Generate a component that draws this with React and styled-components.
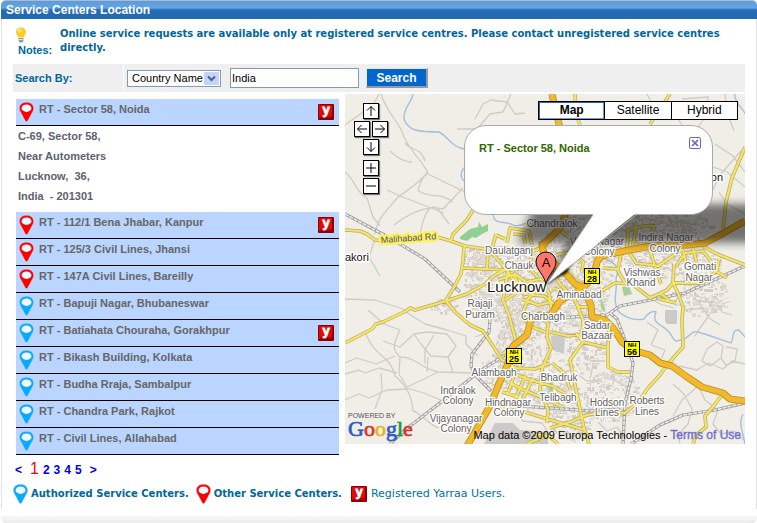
import React, { useState } from 'react';
import styled, { createGlobalStyle, css } from 'styled-components';

const sans = '"Liberation Sans", Arial, sans-serif';
const wide = '"DejaVu Sans", Verdana, sans-serif';

const GlobalStyle = createGlobalStyle`
  *, *::before, *::after { box-sizing: border-box; }
  body { margin: 0; background: #fff; font: bold 11px/14px ${sans}; color: #006699; }
  button, input, select { font-family: inherit; }
`;

const Page = styled.main`
  display: flex;
  flex-direction: column;
  margin-left: 1px;
`;

const TitleBar = styled.header`
  height: 19px;
  padding: 1px 5px 0;
  border-top: 1px solid #aebdca;
  border-radius: 5px 5px 0 0;
  background: linear-gradient(#5b9bdd 0, #66a5e2 7px, #3a80c8 8px, #2369b5 10px, #236ab6 100%);
`;

const Title = styled.h1`
  margin: 0;
  font: bold 12px/16px ${sans};
  color: #fff;
`;

const Body = styled.div`
  padding: 8px 11px 3px;
  border: 1px solid #e2e2e2;
  border-top: 0;
  border-bottom: 0;
`;

const Footer = styled.div`
  height: 8px;
  margin-top: 7px;
  border-bottom: 1px solid #ddd;
  border-radius: 0 0 9px 9px;
  background: linear-gradient(#f7f7f7, #ececec);
`;

const Note = styled.section`
  display: grid;
  grid-template-columns: 47px 1fr;
  height: 37px;
`;

const NoteLabel = styled.div`
  display: flex;
  flex-direction: column;
  padding-left: 2px;
  span { margin: 0 0 0 3px; line-height: 12px; }
  svg { display: block; }
`;

const NoteText = styled.p`
  margin: 0;
  font: bold 10px/14px ${wide};
  padding-right: 24px;
`;

const SearchBar = styled.form`
  display: grid;
  grid-template-columns: 110px 1fr;
  gap: 1px;
  height: 28px;
`;

const SearchCell = styled.div`
  display: flex;
  align-items: center;
  padding: 0 2px;
  background: #efefef;
`;

const SelectWrap = styled.div`
  position: relative;
  display: flex;
  margin: 0 9px 0 1px;
  svg { position: absolute; right: 2px; top: 2px; pointer-events: none; }
`;

const Select = styled.select`
  appearance: none;
  width: 94px;
  height: 17px;
  padding: 0 0 0 4px;
  border: 1px solid #7f9db9;
  border-radius: 0;
  background: #fff;
  font-size: 11px;
  color: #000;
`;

const TextBox = styled.input`
  width: 129px;
  height: 20px;
  margin-right: 7px;
  padding: 0 1px;
  border: 1px solid #7f9db9;
  background: #fff;
  font-size: 11px;
  color: #000;
`;

const SearchButton = styled.button`
  width: 62px;
  height: 20px;
  padding: 0;
  border: 1px solid;
  border-color: #e8e8e8 #999 #999 #e8e8e8;
  border-right-width: 2px;
  border-bottom-width: 2px;
  background: #0066cc;
  color: #fff;
  font: bold 12px/14px ${sans};
`;

const Columns = styled.div`
  display: grid;
  grid-template-columns: 323fr 400fr;
  gap: 6px;
  padding: 2px 0 0 3px;
  align-items: start;
`;

const CenterList = styled.ul`
  margin: 5px 0 0;
  padding: 0;
  list-style: none;
`;

const CenterRow = styled.button`
  display: flex;
  align-items: flex-start;
  width: 100%;
  height: 27px;
  padding: 3px 5px 0 3px;
  border: 0;
  border-bottom: 1px solid #000;
  background: #bad5ff;
  color: #666;
  font: bold 11px/14px ${sans};
  text-align: left;
  cursor: pointer;
  span { flex: 1; margin-left: 5px; }
  svg { flex: none; }
`;

const UserMark = styled.i`
  display: flex;
  padding-top: 2px;
`;

const Address = styled.address`
  height: 86px;
  padding: 0 2px;
  color: #5b6270;
  font: bold 11px/20px ${sans};
  white-space: pre-line;
`;

const Pager = styled.nav`
  display: flex;
  align-items: baseline;
  gap: 4px;
  height: 20px;
  margin-top: 5px;
  padding-left: 2px;
`;

const PageLink = styled.a`
  color: #0000e0;
  font: bold 12px/18px ${sans};
  text-decoration: none;
  ${p => p.$current && css`color: #f00; font-weight: 400; font-size: 16px;`}
  ${p => p.$before && css`margin-right: 4px;`}
  ${p => p.$after && css`margin-left: 4px;`}
`;

const Legend = styled.footer`
  display: flex;
  align-items: center;
  height: 24px;
  margin-top: 2px;
`;

const LegendItem = styled.div`
  display: flex;
  align-items: center;
  gap: 3px;
  margin-right: 7px;
  font: bold 10px/14px ${wide};
  a { margin-left: 1px; color: #0070a8; font: 11px/14px ${wide}; text-decoration: none; }
  &:last-child { margin-left: 2px; }
`;

const MapPanel = styled.section`
  position: relative;
  height: 350px;
  overflow: hidden;
  background: #f1eee8;
`;

const MapDrawing = styled.svg`
  display: block;
  width: 100%;
  height: 100%;
  font-family: ${sans};
  font-weight: 400;
`;

const PanControls = styled.div`
  position: absolute;
  left: 9px;
  top: 9px;
  display: grid;
  grid-template-columns: repeat(4, 9px);
  row-gap: 2px;
`;

const MapButton = styled.button`
  display: flex;
  width: 16px;
  height: 16px;
  grid-column: ${p => p.$col} / span 2;
  margin-top: ${p => (p.$apart ? 3 : 0)}px;
  padding: 0;
  border: 1px solid #000;
  background: #fff;
  box-shadow: 1px 1px 1px #777;
`;

const TypeSwitch = styled.div`
  position: absolute;
  top: 7px;
  right: 7px;
  display: flex;
  width: 200px;
  height: 19px;
  border: 1px solid #000;
  background: #fff;
`;

const TypeButton = styled.button`
  flex: 1;
  padding: 0;
  border: 0;
  border-right: 1px solid #000;
  background: #fff;
  color: #000;
  font: 12px/15px ${sans};
  &:last-child { border-right: 0; }
  &[aria-pressed='true'] { font-weight: 700; box-shadow: inset 1px 1px #2c62b4, inset -1px -1px #6b9ae0; }
`;

const Balloon = styled.article`
  position: absolute;
  left: calc(50% - 81px);
  top: 31px;
  display: flex;
  justify-content: space-between;
  align-items: flex-start;
  width: 249px;
  height: 90px;
  padding: 11px 11px 0 14px;
  border: 1px solid #aaa;
  border-radius: 22px;
  background: #fff;
  color: #336600;
  h2 { margin: 4px 0 0; font: bold 11px/14px ${sans}; }
`;

const BalloonTail = styled.svg`
  position: absolute;
  left: calc(50% + 1px);
  top: 119px;
`;

const CloseButton = styled.button`
  display: flex;
  width: 12px;
  height: 12px;
  padding: 0;
  border: 1px solid #6666cc;
  border-radius: 2px;
  background: #fff;
`;

const Brand = styled.svg`
  position: absolute;
  left: 2px;
  bottom: 0;
`;

const Credit = styled.p`
  position: absolute;
  right: 4px;
  bottom: 1px;
  margin: 0;
  color: #000;
  font: 11px/16px ${sans};
  white-space: nowrap;
  a { color: #7070cc; font-size: 12px; text-decoration: none; -webkit-text-stroke: 0.4px; }
`;

function Pin({ color }) {
  return (
    <svg width="15" height="20" viewBox="0 0 15 20" aria-hidden="true">
      <path d="M7.500.3C3 .3.300 3 .300 6.200c0 1.800 1 3.500 2 5.300l4.300 8h1.800l4.300-8c1-1.800 2-3.500 2-5.300C14.700 3 12 .3 7.500.3Z" fill={color} stroke="#dfeaff" strokeWidth=".4" />
      <ellipse cx="7.500" cy="6.200" rx="4.900" ry="3.700" fill="#f2f7ff" />
    </svg>
  );
}

function YarraaMark() {
  return (
    <svg width="16" height="16" viewBox="0 0 16 16" aria-hidden="true">
      <rect width="16" height="16" rx="1" fill="#8d0000" />
      <rect x="1" y="1" width="13" height="13" fill="#e00a0a" />
      <rect x="2" y="12" width="12" height="2" fill="#b40000" />
      <text x="8" y="10" textAnchor="middle" fill="#fff" stroke="#fff" strokeWidth=".8" fontFamily='"Liberation Sans", sans-serif' fontWeight="700" fontStyle="normal" fontSize="13">y</text>
    </svg>
  );
}

function Bulb() {
  return (
    <svg width="12" height="17" viewBox="0 0 12 17" aria-hidden="true">
      <path d="M6 .5C2.800.5 1 2.600 1 5c0 2.200 1.600 3.300 2.200 5.500h5.600C9.400 8.300 11 7.200 11 5 11 2.600 9.200.5 6 .5Z" fill="#ffc928" />
      <ellipse cx="4.800" cy="3.800" rx="2.300" ry="2" fill="#ffe680" />
      <path d="M3.500 11h5v2.500L7.500 15.500h-3l-1-2Z" fill="#9a9a98" />
      <path d="M3.500 12.500h5" stroke="#ddd" />
    </svg>
  );
}

const glyphs = {
  up: 'M7 12V2.500M3 6.500l4-4 4 4',
  left: 'M12 7H2.500M6.500 3l-4 4 4 4',
  right: 'M2 7h9.500M7.500 3l4 4-4 4',
  down: 'M7 2v9.500M3 7.500l4 4 4-4',
  in: 'M7 2v10M2 7h10',
  out: 'M2 7h10',
};

const controls = [
  ['up', 'Pan up', 2],
  ['left', 'Pan left', 1],
  ['right', 'Pan right', 3],
  ['down', 'Pan down', 2],
  ['in', 'Zoom in', 2],
  ['out', 'Zoom out', 2],
];

const railways = [
  'M0 120L45 144L80 165L115 198',
  'M45 350L60 336L100 305L135 277L160 261L180 244',
  'M145 225L144 238L127 260L126 272L132 283L146 297',
  'M400 172L340 199L275 212L262 221L210 224',
  'M265 219L272 225L277 238L288 269L286 285L280 309L278 350',
  'M286 350L315 331L338 321L370 316L400 309',
  'M150 310L205 314L245 317L275 315',
];

const rivers = [
  'M68 0C66 10 58 14 59 25C63 37 74 38 94 38C104 43 107 54 120 55',
  'M119 74C114 80 116 84 119 87',
  'M148 120C149 132 160 126 168 131C174 134 178 128 186 129',
  'M253 163C264 166 277 170 271 184C273 197 267 205 273 217C280 224 291 227 299 225C302 220 307 216 311 218C306 230 317 230 323 237C329 243 327 249 336 246C347 244 345 234 356 239C367 242 374 245 386 249C389 246 386 235 394 236L400 243',
  'M390 0C388 8 400 16 400 20',
  'M398 320C393 328 398 339 400 350',
];

const lanes = [
  'M34 0L28 11L0 31M36 0C42 20 55 28 59 43C68 61 75 64 83 79',
  'M45 57C53 65 60 68 67 68M0 78C12 88 10 98 22 104L28 123L35 132',
  'M83 77C77 87 65 94 52 104C43 116 33 122 30 140',
  'M83 79C75 85 72 98 74 97C84 105 94 97 108 108',
  'M60 49C67 58 75 52 80 67M83 80L120 98M42 96L55 102L99 119M49 131C66 118 82 111 98 115L118 94',
  'M30 145L24 163L35 182M75 142C79 116 86 109 93 115L104 130',
  'M132 35L145 20L158 18L166 0M112 35L132 35L145 42',
  'M130 25L138 10L146 6L162 8L170 20L180 19',
  'M0 205L30 206L61 216M21 240C30 264 45 260 50 282C63 293 67 304 68 317',
  'M23 216L39 230L55 236C47 252 48 257 55 263C71 263 76 275 93 278L130 279',
  'M61 218L80 230L102 236L121 242L121 250L133 262',
  'M69 240L82 238L102 240L111 252L103 263L86 262L76 250L69 240',
  'M38 247L55 253L69 240M55 263L54 280L62 293L79 285L93 278M83 263L82 278M103 263L108 279M50 262L31 270L12 264L0 269',
  'M0 280L14 276L20 279L34 274L52 279M0 306L14 300L24 304L42 296L62 295M36 279L37 296L30 315',
  'M68 317C75 318 82 330 94 334M62 294L79 299L98 307M80 270L80 256L89 241M130 243L138 240',
  'M302 0L309 14L328 18L340 35M337 5L363 3L362 20L350 38M380 0L382 18L389 37',
  'M368 96L374 82L395 58L400 55M370 50L388 62L400 78M368 73L382 78L400 93',
  'M374 98L382 110L400 120M319 133L336 128L351 131',
  'M340 216L358 214L364 224L375 231M352 207L370 208L377 218L387 221M365 220L355 234L350 242',
  'M362 255L372 248L378 252L376 264L365 272L357 267L362 255M381 253L392 255L390 268L381 271L376 264',
  'M305 204L315 210L329 214M302 228L313 236L306 251M306 251L320 256L316 266L306 263',
  'M334 272L352 276L363 269L378 275L387 267L400 270M352 293L337 306L328 322',
  'M328 290L339 300L347 315L343 330L333 341L335 350M353 291L360 306L373 316L368 330L376 340L389 337L400 347',
  'M216 312L207 322L218 333L238 328M222 337L230 348M170 318L178 327L197 329L205 341M253 328L262 337L272 333L280 344',
  'M238 259L246 267L260 267M232 280L242 287L257 287M249 266L245 285M265 284L280 292L286 302',
];

const streets = [
  'M0 136L15 137L22 140L30 146L40 147L75 142L92 143L106 147L120 152L140 155L160 154L182 158L197 155',
  'M106 147L108 140L122 126L128 116',
  'M119 153L118 167L116 180L108 195L101 206',
  'M118 174L141 175L165 176L184 174L193 183',
  'M143 155L142 176M151 140L146 158L162 176L177 199',
  'M0 249L27 235L31 230L38 228L61 217L65 214L70 216L101 207L122 200L140 190L150 181L164 174',
  'M101 207L110 218L125 231L138 237L148 252L157 266L171 274L190 275L205 269',
  'M163 176L160 195L158 206L164 221L171 248L158 260',
  'M162 149L165 134L184 137L187 152M168 140L179 141L180 150M160 145L151 141',
  'M153 186L170 180L181 188L196 185L204 199L207 219M164 191L179 200L199 202L213 213',
  'M177 205L193 211L206 208M198 190L183 205L177 221L184 232L200 238M169 181L176 196L160 206',
  'M178 220L194 222L203 229L202 243L206 254L197 275L195 296L203 316L202 329',
  'M163 277L182 285L207 292L220 299M164 288L176 295L201 305L217 313',
  'M171 276L163 299M181 281L170 305M157 298L174 303M188 284L177 307M207 269L220 280L225 295',
  'M151 313L180 318L209 327L240 336M205 334L225 328L242 321L260 318L280 319L293 308L303 294L315 281L322 271L338 253L337 226L338 213L333 199L328 189L329 170',
  'M238 248L225 266L229 286L233 305L238 330L244 350M231 239L238 248L263 254L263 273L273 278L285 278',
  'M205 238L223 242L238 240L263 241M264 234L263 254M207 178L216 191L230 206L238 226L237 240M208 194L226 200L234 213L248 213',
  'M252 201L258 196L270 189L287 190L305 204L322 196L328 189L358 189L372 176L374 165',
  'M258 174L272 175L280 189M273 175L276 160L289 154M283 157L291 169L313 172L338 155M304 154L316 190',
  'M338 155L341 171L366 174L382 184M332 171L340 159L358 157L371 174M348 154L352 170M314 205L331 209M315 199L324 206',
  'M282 154L283 136L298 132L310 132M286 148L306 147M291 131L288 152M310 132L302 151',
  'M400 53L387 84L381 108L378 135M354 150L372 160L400 171M325 0L317 12L305 30M230 0L231 20L235 31',
  'M377 301L367 314L360 322L361 333L351 341L348 350',
  'M209 131L226 145L238 151L251 163M183 175L188 157L203 151',
  'M211 161L227 158L238 168L237 178M218 171L228 184L237 190M189 340L204 342L213 350M182 350L198 343',
];

const highways = [
  'M122 352L145 312L153 292L162 272L168 252L182 241L186 225L195 221L205 222L215 207L238 194',
  'M207 0L211 18L219 50L222 115L216 133L204 145L197 151L199 160L211 171L220 179L230 190L238 194L246 211L247 223L260 226L268 234L277 248L287 256L305 261L315 269L327 272L342 283L357 293L378 299L385 305L400 307',
  'M400 127L375 141L360 149L342 151L320 151L300 153L284 156L256 162L252 168L249 181L238 194',
];

const places = [
  ['Daulatganj', 164, 160], ['Chauk', 174, 175], ['Chandralok', 207, 133],
  ['Indira Nagar', 321, 147], ['Colony', 320, 158], ['Vikas Nagar', 252, 151], ['Colony', 254, 161],
  ['Gomati', 355, 176], ['Nagar', 354, 187], ['Vishwas', 297, 182], ['Khand', 296, 192],
  ['Aminabad', 234, 204], ['Sadar', 252, 235], ['Bazaar', 252, 245], ['Charbagh', 198, 226],
  ['Rajaji', 135, 213], ['Puram', 135, 224], ['Alambagh', 149, 282], ['Bhadruk', 214, 287],
  ['Telibagh', 213, 307], ['Indralok', 113, 300], ['Colony', 113, 310],
  ['Hindnagar', 163, 312], ['Colony', 164, 322], ['Vijayanagar', 111, 328], ['Colony', 111, 338],
  ['Hodson', 262, 312], ['Lines', 262, 322], ['Roberts', 302, 310], ['Lines', 302, 321],
];

// Built-up districts: centre x, centre y, radius x, radius y, number of blocks.
const districts = [
  [170, 190, 52, 40, 800], [225, 180, 42, 52, 800], [185, 240, 32, 28, 320], [132, 166, 15, 14, 130],
  [150, 205, 30, 22, 180], [300, 148, 60, 28, 520], [330, 168, 48, 20, 240], [235, 240, 30, 38, 320],
  [195, 292, 34, 24, 280], [155, 276, 20, 18, 130], [266, 302, 28, 26, 280], [225, 318, 22, 28, 190],
  [355, 201, 28, 20, 220], [290, 130, 80, 16, 350], [166, 255, 16, 26, 140], [98, 212, 13, 8, 50],
];

function makeBlocks() {
  let seed = 71;
  const next = () => {
    seed = (seed * 16807) % 2147483647;
    return seed / 2147483647;
  };
  const paths = ['', ''];
  districts.forEach(([cx, cy, rx, ry, count]) => {
    for (let i = 0; i < count; i += 1) {
      const angle = next() * Math.PI * 2;
      const reach = Math.sqrt(next());
      const x = Math.round(cx + Math.cos(angle) * reach * rx);
      const y = Math.round(cy + Math.sin(angle) * reach * ry);
      const w = 1 + Math.round(next() * 3);
      const h = 1 + Math.round(next() * 2);
      paths[i % 2] += `M${x} ${y}h${w}v${h}h-${w}z`;
    }
  });
  return paths;
}

const blocks = makeBlocks();

function Lines({ paths, ...rest }) {
  return <path d={paths.join('')} fill="none" strokeLinejoin="round" {...rest} />;
}

function Shield({ x, y, number }) {
  return (
    <g transform={`translate(${x} ${y})`} textAnchor="middle" fontWeight="700">
      <rect x=".5" y=".5" width="15" height="15" fill="#ff0" stroke="#000" />
      <text x="8" y="6" fontSize="6">NH</text>
      <text x="8" y="14" fontSize="9">{number}</text>
    </g>
  );
}

function CityMap() {
  return (
    <MapDrawing viewBox="0 0 400 350" preserveAspectRatio="xMidYMid slice" role="img" aria-label="Map of Lucknow">
      <defs>
        <filter id="soft" x="-20%" y="-50%" width="140%" height="200%"><feGaussianBlur stdDeviation="4" /></filter>
        <filter id="tight"><feGaussianBlur stdDeviation="1" /></filter>
      </defs>
      <rect width="400" height="350" fill="#f1eee8" />
      <path d={blocks[0]} fill="#d3cdc5" />
      <path d={blocks[1]} fill="#dfdad3" />
      <path d="M115 143l10-8 8-2 1-5 3 5 6-3v7l-6 3-6 4-4-1-5 4-7-2z" fill="#92cf93" />
      <path d="M277 193l7-1 3 8-8 2zM205 287l3 1v10l-5 2zM255 203l4 8 2 8-5-5z" fill="#a8cf95" />
      <path d="M320 216h12v14h-10l-2-3zM206 242h14l-1 18-11-4zM150 329h18l7 7 28 2v12h-64z" fill="#cbcac8" />
      <Lines paths={lanes} stroke="#d0cbc4" strokeWidth="1.300" />
      <Lines paths={rivers} stroke="#a4c0da" strokeWidth="1.400" />
      <Lines paths={railways} stroke="#9b9b9b" strokeWidth="3.200" />
      <Lines paths={railways} stroke="#ececea" strokeWidth="1.600" strokeDasharray="4 1" />
      <Lines paths={streets} stroke="#b5aa72" strokeWidth="3.600" />
      <Lines paths={streets} stroke="#f7e65c" strokeWidth="2.200" />
      <Lines paths={highways} stroke="#bd8c22" strokeWidth="7" />
      <Lines paths={highways} stroke="#f2b92a" strokeWidth="5.400" />
      <g textAnchor="middle" fontSize="10" fill="#62605d" stroke="#fff" strokeWidth="2.500" strokeLinejoin="round" paintOrder="stroke">
        {places.map(([name, x, y]) => <text key={`${name}${x}${y}`} x={x} y={y}>{name}</text>)}
      </g>
      <text x="36" y="149" transform="rotate(-4 36 149)" fontSize="9" fill="#555" stroke="#fbf06b" strokeWidth="5" strokeLinejoin="round" paintOrder="stroke">Malihabad Rd</text>
      <g fill="#111" stroke="#fff" strokeWidth="3" strokeLinejoin="round" paintOrder="stroke">
        <text x="0" y="167" fontSize="11">akori</text>
        <text x="378" y="87" textAnchor="end" fontSize="11">Chinhaton</text>
        <text x="142" y="198" fontSize="15">Lucknow</text>
      </g>
      <Shield x={239} y={174} number="28" />
      <Shield x={161} y={254} number="25" />
      <Shield x={279} y={247} number="56" />
      <path d="M190 110H420V149H245L217 172L201 192L222 149H172Z" fill="#000" opacity=".52" filter="url(#soft)" />
      <path d="M201 191l7-14 10-7h8l-4 9-12 6z" fill="#000" opacity=".85" filter="url(#tight)" />
      <path d="M201 191C200 181 191 176 191 168a10 10 0 0 1 20 0C211 176 202 181 201 191Z" fill="#ff776b" stroke="#000" />
      <text x="201" y="173" textAnchor="middle" fontSize="13">A</text>
    </MapDrawing>
  );
}

const centers = [
  { name: 'RT - Sector 58, Noida', user: true, address: 'C-69, Sector 58,\nNear Autometers\nLucknow, \u00a036,\nIndia \u00a0- 201301' },
  { name: 'RT - 112/1 Bena Jhabar, Kanpur', user: true },
  { name: 'RT - 125/3 Civil Lines, Jhansi' },
  { name: 'RT - 147A Civil Lines, Bareilly' },
  { name: 'RT - Bapuji Nagar, Bhubaneswar', authorized: true },
  { name: 'RT - Batiahata Chouraha, Gorakhpur', authorized: true, user: true },
  { name: 'RT - Bikash Building, Kolkata', authorized: true },
  { name: 'RT - Budha Rraja, Sambalpur', authorized: true },
  { name: 'RT - Chandra Park, Rajkot', authorized: true },
  { name: 'RT - Civil Lines, Allahabad', authorized: true },
];

const RED = '#ff0000';
const BLUE = '#08aaff';

const brandLetters = [['G', '#2a5bd0'], ['o', '#d8342c'], ['o', '#e8b414'], ['g', '#2a5bd0'], ['l', '#27963c'], ['e', '#d8342c']];

export default function App() {
  const [open, setOpen] = useState(0);
  const [mapType, setMapType] = useState('Map');
  const [balloon, setBalloon] = useState(true);

  return (
    <Page>
      <GlobalStyle />
      <TitleBar><Title>Service Centers Location</Title></TitleBar>
      <Body>
        <Note>
          <NoteLabel><Bulb /><span>Notes:</span></NoteLabel>
          <NoteText>
            Online service requests are available only at registered service centres. Please contact unregistered service centres directly.
          </NoteText>
        </Note>
        <SearchBar onSubmit={e => e.preventDefault()}>
          <SearchCell><label htmlFor="field">Search By:</label></SearchCell>
          <SearchCell>
            <SelectWrap>
              <Select id="field"><option>Country Name</option></Select>
              <svg width="15" height="13" viewBox="0 0 15 13" aria-hidden="true">
                <rect width="15" height="13" rx="1" fill="#c3d3fb" />
                <path d="M4 4.500l3.500 3.500L11 4.500" fill="none" stroke="#4d6185" strokeWidth="2" />
              </svg>
            </SelectWrap>
            <TextBox aria-label="Search text" defaultValue="India" />
            <SearchButton type="submit">Search</SearchButton>
          </SearchCell>
        </SearchBar>
        <Columns>
          <CenterList>
            {centers.map((c, i) => (
              <li key={c.name}>
                <CenterRow type="button" aria-expanded={open === i} onClick={() => setOpen(i)}>
                  <Pin color={c.authorized ? BLUE : RED} />
                  <span>{c.name}</span>
                  {c.user && <UserMark><YarraaMark /></UserMark>}
                </CenterRow>
                {open === i && c.address && <Address>{c.address}</Address>}
              </li>
            ))}
          </CenterList>
          <MapPanel>
            <CityMap />
            <PanControls>
              {controls.map(([id, label, col]) => (
                <MapButton key={id} type="button" aria-label={label} $col={col} $apart={id === 'in'}>
                  <svg width="14" height="14" viewBox="0 0 14 14"><path d={glyphs[id]} fill="none" stroke="#000" /></svg>
                </MapButton>
              ))}
            </PanControls>
            {balloon && (
              <>
                <Balloon>
                  <h2>RT - Sector 58, Noida</h2>
                  <CloseButton type="button" aria-label="Close" onClick={() => setBalloon(false)}>
                    <svg width="10" height="10" viewBox="0 0 10 10"><path d="M2 2l6 6M8 2l-6 6" stroke="#6666cc" strokeWidth="1.700" /></svg>
                  </CloseButton>
                </Balloon>
                <BalloonTail width="92" height="73" viewBox="0 0 92 73" aria-hidden="true">
                  <path d="M48 0L0 72L90 0Z" fill="#fff" />
                  <path d="M47 2L0 72L90 2" fill="none" stroke="#aaa" />
                </BalloonTail>
              </>
            )}
            <TypeSwitch>
              {['Map', 'Satellite', 'Hybrid'].map(type => (
                <TypeButton key={type} type="button" aria-pressed={mapType === type} onClick={() => setMapType(type)}>{type}</TypeButton>
              ))}
            </TypeSwitch>
            <Brand width="76" height="36" viewBox="0 0 76 36">
              <text x="1" y="10" fontFamily={sans} fontSize="7" fontWeight="400" fill="#555">POWERED BY</text>
              <text x="1" y="28" fontFamily='"Liberation Serif", serif' fontSize="22" fontWeight="400" strokeWidth=".7">
                {brandLetters.map(([letter, color], i) => <tspan key={i} fill={color} stroke={color}>{letter}</tspan>)}
              </text>
            </Brand>
            <Credit>Map data ©2009 Europa Technologies - <a href="#terms">Terms of Use</a></Credit>
          </MapPanel>
        </Columns>
        <Pager aria-label="Pages">
          <PageLink href="#prev" $before>&lt;</PageLink>
          {[1, 2, 3, 4, 5].map(n => <PageLink key={n} href={`#page-${n}`} $current={n === 1}>{n}</PageLink>)}
          <PageLink href="#next" $after>&gt;</PageLink>
        </Pager>
        <Legend>
          <LegendItem><Pin color={BLUE} />Authorized Service Centers.</LegendItem>
          <LegendItem><Pin color={RED} />Other Service Centers.</LegendItem>
          <LegendItem><YarraaMark /><a href="#users">Registered Yarraa Users.</a></LegendItem>
        </Legend>
      </Body>
      <Footer />
    </Page>
  );
}
